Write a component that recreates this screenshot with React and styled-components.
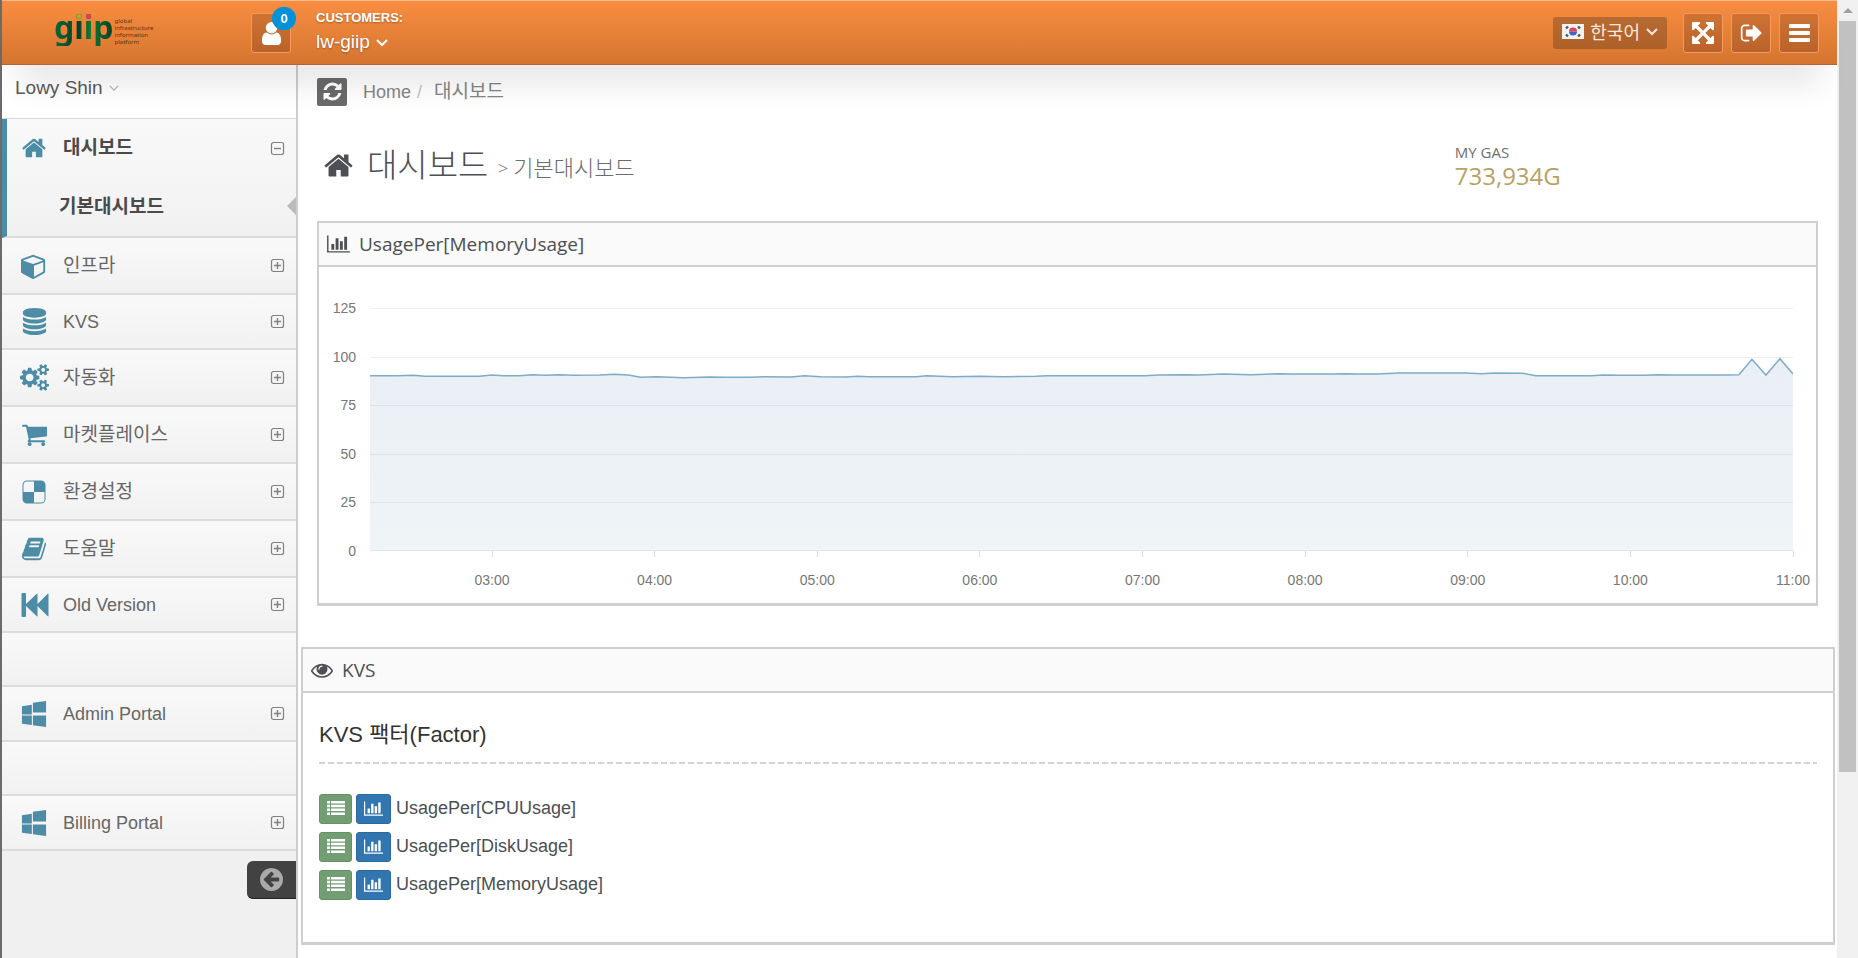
import React from 'react';
import styled, { createGlobalStyle, css } from 'styled-components';

const sans = '"Liberation Sans", "Noto Sans CJK KR", sans-serif';
const open = '"Open Sans", "Noto Sans CJK KR", sans-serif';

const GlobalStyle = createGlobalStyle`
  * { box-sizing: border-box; }
  body { margin: 0; background: #fff; font-family: ${sans}; color: #4c4f53; overflow: hidden; }
  button { font: inherit; padding: 0; cursor: pointer; }
  a { color: inherit; text-decoration: none; }
  h1, h2, h3, ul, ol, p { margin: 0; padding: 0; font-weight: 400; list-style: none; }
`;

/* ---------- icons ---------- */

const Svg = styled.svg`
  display: block;
  flex: none;
  fill: currentColor;
  overflow: visible;
`;

const paths = {
  home: ['0 0 1792 1792', 'M1472 992v480q0 26-19 45t-45 19h-384v-384h-256v384h-384q-26 0-45-19t-19-45v-480q0-1 .5-3t.5-3l575-474 575 474q1 2 1 6zm223-69l-62 74q-8 9-21 11h-3q-13 0-21-7l-692-577-692 577q-12 8-24 7-13-2-21-11l-62-74q-8-10-7-23.5t11-21.5l719-599q32-26 76-26t76 26l244 204v-195q0-14 9-23t23-9h192q14 0 23 9t9 23v408l219 182q10 8 11 21.5t-7 23.5z'],
  cube: ['0 0 1792 1792', 'M896 1629l640-349v-636l-640 233v752zm-64-865l698-254-698-254-698 254zm832-252v768q0 35-18 65t-49 47l-704 384q-28 16-61 16t-61-16l-704-384q-31-17-49-47t-18-65v-768q0-40 23-73t61-47l704-256q22-8 44-8t44 8l704 256q38 14 61 47t23 73z'],
  database: ['0 0 1792 1792', 'M896 768q237 0 443-43t325-127v170q0 69-103 128t-280 93.5-385 34.5-385-34.5-280-93.5-103-128v-170q119 84 325 127t443 43zm0 768q237 0 443-43t325-127v170q0 69-103 128t-280 93.5-385 34.5-385-34.5-280-93.5-103-128v-170q119 84 325 127t443 43zm0-384q237 0 443-43t325-127v170q0 69-103 128t-280 93.5-385 34.5-385-34.5-280-93.5-103-128v-170q119 84 325 127t443 43zm0-1152q208 0 385 34.5t280 93.5 103 128v128q0 69-103 128t-280 93.5-385 34.5-385-34.5-280-93.5-103-128v-128q0-69 103-128t280-93.5 385-34.5z'],
  cogs: ['0 0 1920 1792', 'M896 896q0-106-75-181t-181-75-181 75-75 181 75 181 181 75 181-75 75-181zm768 512q0-52-38-90t-90-38-90 38-38 90q0 53 37.5 90.5t90.5 37.5 90.5-37.5 37.5-90.5zm0-1024q0-52-38-90t-90-38-90 38-38 90q0 53 37.5 90.5t90.5 37.5 90.5-37.5 37.5-90.5zm-384 421v185q0 10-7 19.5t-16 10.5l-155 24q-11 35-32 76 34 48 90 115 7 11 7 20 0 12-7 19-23 30-82.5 89.5t-78.5 59.5q-11 0-21-7l-115-90q-37 19-77 31-11 108-23 155-7 24-30 24h-186q-11 0-20-7.5t-10-17.5l-23-153q-34-10-75-31l-118 89q-7 7-20 7-11 0-21-8-144-133-144-160 0-9 7-19 10-14 41-53t47-61q-23-44-35-82l-152-24q-10-1-17-9.5t-7-19.5v-185q0-10 7-19.5t16-10.5l155-24q11-35 32-76-34-48-90-115-7-11-7-20 0-12 7-20 22-30 82-89t79-59q11 0 21 7l115 90q34-18 77-32 11-108 23-154 7-24 30-24h186q11 0 20 7.5t10 17.5l23 153q34 10 75 31l118-89q8-7 20-7 11 0 21 8 144 133 144 160 0 8-7 19-12 16-42 54t-45 60q23 48 34 82l152 23q10 2 17 10.5t7 19.5zm640 533v140q0 16-149 31-12 27-30 52 51 113 51 138 0 4-4 7-122 71-124 71-8 0-46-47t-52-68q-20 2-30 2t-30-2q-14 21-52 68t-46 47q-2 0-124-71-4-3-4-7 0-25 51-138-18-25-30-52-149-15-149-31v-140q0-16 149-31 13-29 30-52-51-113-51-138 0-4 4-7 4-2 35-20t59-34 30-16q8 0 46 46.5t52 67.5q20-2 30-2t30 2q51-71 92-112l6-2q4 0 124 70 4 3 4 7 0 25-51 138 17 23 30 52 149 15 149 31zm0-1024v140q0 16-149 31-12 27-30 52 51 113 51 138 0 4-4 7-122 71-124 71-8 0-46-47t-52-68q-20 2-30 2t-30-2q-14 21-52 68t-46 47q-2 0-124-71-4-3-4-7 0-25 51-138-18-25-30-52-149-15-149-31v-140q0-16 149-31 13-29 30-52-51-113-51-138 0-4 4-7 4-2 35-20t59-34 30-16q8 0 46 46.5t52 67.5q20-2 30-2t30 2q51-71 92-112l6-2q4 0 124 70 4 3 4 7 0 25-51 138 17 23 30 52 149 15 149 31z'],
  cart: ['0 0 1792 1792', 'M704 1536q0 52-38 90t-90 38-90-38-38-90 38-90 90-38 90 38 38 90zm896 0q0 52-38 90t-90 38-90-38-38-90 38-90 90-38 90 38 38 90zm128-1088v512q0 24-16.5 42.5t-40.5 21.5l-1044 122q13 60 13 70 0 16-24 64h920q26 0 45 19t19 45-19 45-45 19h-1024q-26 0-45-19t-19-45q0-11 8-31.5t16-36 21.5-40 15.5-29.5l-177-823h-204q-26 0-45-19t-19-45 19-45 45-19h256q16 0 28.5 6.5t19.5 15.5 13 24.5 8 26 5.5 29.5 4.5 26h1201q26 0 45 19t19 45z'],
  tiles: ['0 0 24 24', 'M5 0.5h14a4.5 4.5 0 0 1 4.500 4.500v14a4.500 4.500 0 0 1-4.500 4.500h-14a4.500 4.500 0 0 1-4.500-4.500v-14a4.500 4.500 0 0 1 4.500-4.500zM12 12V1.500H5A3.500 3.500 0 0 0 1.500 5V12zM12 12V22.500H19A3.500 3.500 0 0 0 22.500 19V12z'],
  book: ['0 0 1792 1792', 'M1703 478q40 57 18 129l-275 906q-19 64-76.5 107.5t-122.500 43.500h-923q-77 0-148.500-53.500t-99.500-131.500q-24-67-2-127 0-4 3-27t4-37q1-8-3-21.500t-3-19.500q2-11 8-21t16.500-23.500 16.500-23.500q23-38 45-91.500t30-91.500q3-10 .5-30t-.5-28q3-11 17-28t17-23q21-36 42-92t25-90q1-9-2.500-32t.5-28q4-13 22-30.500t22-22.500q19-26 42.500-84.500t27.500-96.500q1-8-3-25.500t-2-26.500q2-8 9-18t18-23 17-21q8-12 16.500-30.500t15-35 16-36 19.500-32 26.500-23.500 36-11.500 47.500 5.500l-1 3q38-9 51-9h761q74 0 114 56t18 130l-274 906q-36 119-71.500 153.500t-128.500 34.500h-869q-27 0-38 15-11 16-1 43 24 70 144 70h923q29 0 56-15.500t35-41.500l300-987q7-22 5-57 38 15 59 43zm-1064 2q-4 13 2 22.500t20 9.500h608q13 0 25.500-9.500t16.500-22.500l21-64q4-13-2-22.500t-20-9.500h-608q-13 0-25.500 9.500t-16.500 22.500zm-83 256q-4 13 2 22.500t20 9.500h608q13 0 25.500-9.500t16.500-22.500l21-64q4-13-2-22.500t-20-9.500h-608q-13 0-25.500 9.500t-16.500 22.500z'],
  rewind: ['0 0 26 24', 'M1 0h2.500q1 0 1 1v10L15 1q1-1 1 .3V11L26 1q1-1 1 .3v21.400q0 1.300-1 .3L16 13v9.700q0 1.300-1 .3L4.500 13v10q0 1-1 1H1q-1 0-1-1V1q0-1 1-1z'],
  windows: ['0 0 1664 1792', 'M682 1006v651l-682-94v-557h682zm0-743v659h-682v-565zm982 743v786l-907-125v-661h907zm0-1006v794h-907v-669z'],
  chart: ['0 0 2048 1792', 'M640 896v512h-256v-512h256zm384-512v1024h-256v-1024h256zm1024 1152v128h-2048v-1536h128v1408h1920zm-640-896v768h-256v-768h256zm384-384v1152h-256v-1152h256z'],
  eye: ['0 0 1792 1792', 'M1664 960q-152-236-381-353 61 104 61 225 0 185-131.500 316.500t-316.500 131.500-316.500-131.500-131.500-316.500q0-121 61-225-229 117-381 353 133 205 333.500 326.500t434.500 121.500 434.500-121.500 333.500-326.500zm-720-384q0-20-14-34t-34-14q-125 0-214.500 89.500t-89.500 214.500q0 20 14 34t34 14 34-14 14-34q0-86 61-147t147-61q20 0 34-14t14-34zm848 384q0 34-20 69-140 230-376.500 368.500t-499.500 138.500-499.500-139-376.500-368q-20-35-20-69t20-69q140-229 376.500-368t499.500-139 499.500 139 376.500 368q20 35 20 69z'],
  refresh: ['0 0 1792 1792', 'M1639 1056q0 5-1 7-64 268-268 434.500t-478 166.500q-146 0-282.500-55t-243.500-157l-129 129q-19 19-45 19t-45-19-19-45v-448q0-26 19-45t45-19h448q26 0 45 19t19 45-19 45l-137 137q71 66 161 102t187 36q134 0 250-65t186-179q11-17 53-117 8-23 30-23h192q13 0 22.500 9.500t9.500 22.500zm25-800v448q0 26-19 45t-45 19h-448q-26 0-45-19t-19-45 19-45l138-138q-148-137-349-137-134 0-250 65t-186 179q-11 17-53 117-8 23-30 23h-199q-13 0-22.500-9.500t-9.500-22.500v-7q65-268 270-434.500t480-166.500q146 0 284 55.500t245 156.500l130-129q19-19 45-19t45 19 19 45z'],
  user: ['128 0 1536 1792', 'M1536 1399q0 109-62.500 187t-150.500 78h-854q-88 0-150.500-78t-62.500-187q0-85 8.500-160.500t31.500-152 58.500-131 94-89 134.500-34.500q131 128 313 128t313-128q76 0 134.500 34.500t94 89 58.500 131 31.500 152 8.500 160.500zm-256-887q0 159-112.500 271.500t-271.500 112.500-271.500-112.500-112.500-271.500 112.500-271.500 271.500-112.500 271.500 112.500 112.500 271.500z'],
  expand: ['128 128 1536 1536', 'M1411 541l-355 355 355 355 144-144q29-31 70-14 39 17 39 59v448q0 26-19 45t-45 19h-448q-42 0-59-40-17-39 14-69l144-144-355-355-355 355 144 144q31 30 14 69-17 40-59 40h-448q-26 0-45-19t-19-45v-448q0-42 40-59 39-17 69 14l144 144 355-355-355-355-144 144q-19 19-45 19-12 0-24-5-40-17-40-59v-448q0-26 19-45t45-19h448q42 0 59 40 17 39-14 69l-144 144 355 355 355-355-144-144q-31-30-14-69 17-40 59-40h448q26 0 45 19t19 45v448q0 42-39 59-13 5-25 5-26 0-45-19z'],
  signout: ['0 64 1664 1664', 'M704 1440q0 4 1 20t.5 26.500-3 23.500-10 19.500-20.500 6.500h-320q-119 0-203.500-84.500t-84.500-203.500v-704q0-119 84.500-203.500t203.500-84.500h320q13 0 22.500 9.500t9.500 22.500q0 4 1 20t.5 26.500-3 23.500-10 19.500-20.500 6.500h-320q-66 0-113 47t-47 113v704q0 66 47 113t113 47h312l11.500 1 11.500 3 8 5.500 7 9 2 13.500zm928-544q0 26-19 45l-544 544q-19 19-45 19t-45-19-19-45v-288h-448q-26 0-45-19t-19-45v-384q0-26 19-45t45-19h448v-288q0-26 19-45t45-19 45 19l544 544q19 19 19 45z'],
  bars: ['0 0 21 18', 'M1 0h19q1 0 1 1v2q0 1-1 1H1q-1 0-1-1V1q0-1 1-1zM1 7h19q1 0 1 1v2q0 1-1 1H1q-1 0-1-1V8q0-1 1-1zM1 14h19q1 0 1 1v2q0 1-1 1H1q-1 0-1-1v-2q0-1 1-1z'],
  list: ['0 0 18 14', 'M0 0h3v2.500H0zM4 0h14v2.500H4zM0 3.800h3v2.500H0zM4 3.800h14v2.500H4zM0 7.600h3v2.500H0zM4 7.600h14v2.500H4zM0 11.400h3v2.500H0zM4 11.400h14v2.500H4z'],
  back: ['128 128 1536 1536', 'M1408 960v-128q0-26-19-45t-45-19h-502l189-189q19-19 19-45t-19-45l-91-91q-18-18-45-18t-45 18l-362 362-91 91q-18 18-18 45t18 45l91 91 362 362q18 18 45 18t45-18l91-91q18-18 18-45t-18-45l-189-189h502q26 0 45-19t19-45zm256-64q0 209-103 385.500t-279.500 279.500-385.500 103-385.500-103-279.500-279.500-103-385.500 103-385.500 279.500-279.500 385.500-103 385.500 103 279.500 279.500 103 385.500z'],
};

const Icon = ({ name, w, h = w }) => (
  <Svg width={w} height={h} viewBox={paths[name][0]} aria-hidden="true">
    <path d={paths[name][1]} />
  </Svg>
);

const Caret = ({ w = 12 }) => (
  <Svg width={w} height={w / 2 + 1} viewBox="0 0 12 7" aria-hidden="true">
    <path d="M1 1l5 5 5-5" fill="none" stroke="currentColor" strokeWidth="2" />
  </Svg>
);

const Toggle = ({ open: isOpen }) => (
  <Svg width="13" height="13" viewBox="0 0 13 13" aria-hidden="true">
    <g fill="none" stroke="#808080">
      <rect x="0.5" y="0.5" width="12" height="12" rx="2" strokeWidth="1.2" />
      <path d={isOpen ? 'M3 6.500h7' : 'M3 6.500h7M6.500 3v7'} strokeWidth="1.4" />
    </g>
  </Svg>
);

const Flag = () => (
  <Svg width="22" height="15" viewBox="0 0 22 15" aria-hidden="true">
    <rect width="22" height="15" fill="#f2f2f2" />
    <path d="M7 7.500a4 4 0 0 1 8 0z" fill="#e8414d" />
    <path d="M7 7.500a4 4 0 0 0 8 0z" fill="#3f63c8" />
    <g stroke="#555" strokeWidth="2.400">
      <path d="M4 4.500l2-2M16 2.500l2 2M4 10.500l2 2M16 12.500l2-2" />
    </g>
  </Svg>
);

/* ---------- frame ---------- */

const Window = styled.div`
  display: flex;
  min-height: 100vh;
  border-left: 2px solid #6b6b6b;
`;

const Page = styled.div`
  flex: 1;
  min-width: 0;
  display: flex;
  flex-direction: column;
`;

const ScrollTrack = styled.div`
  flex: none;
  width: 21px;
  height: 100vh;
  padding: 8px 2px 0;
  background: #f1f1f1;
`;

const ScrollArrow = styled.div`
  width: 0;
  margin: 0 auto 8px;
  border: 5px solid transparent;
  border-top: 0;
  border-bottom-color: #a0a0a0;
`;

const ScrollThumb = styled.div`
  height: 79%;
  background: #c1c1c1;
`;

/* ---------- header ---------- */

const Header = styled.header`
  position: relative;
  z-index: 2;
  display: flex;
  align-items: flex-start;
  height: 65px;
  padding: 0 18px 0 52px;
  border-top: 1px solid #f9bd90;
  border-bottom: 1px solid #b7652d;
  background: linear-gradient(#f88d40, #d57530);
  box-shadow: 0 34px 32px -16px rgba(0, 0, 0, 0.11);
  color: #fff;
`;

const Logo = styled.a`
  display: flex;
  width: 197px;
  padding-top: 8px;
  font-family: "Noto Sans", sans-serif;
  color: #0c5030;
`;

const LogoWord = styled.span`
  font-size: 32px;
  line-height: 36px;
  font-weight: 700;
  color: transparent;
  background:
    linear-gradient(90deg, #a8b02c 50%, #d8405c 50%) 20px 0 / 20px 12px no-repeat,
    linear-gradient(90deg, #0b6a38, #083c28 40%, #0b7a30 60%, #083c28);
  background-clip: text;
`;

const LogoTag = styled.span`
  padding: 9px 0 0 1px;
  font-size: 6px;
  line-height: 7px;
  color: #5d3315;
  white-space: pre-line;
`;

const headerButton = css`
  display: flex;
  align-items: center;
  justify-content: center;
  width: 40px;
  height: 40px;
  margin-top: 12px;
  border: 1px solid #f39a5c;
  border-radius: 3px;
  background: linear-gradient(#cf7334, #b9622a);
  color: #fff;
`;

const HeaderButton = styled.button`
  ${headerButton}
  position: relative;
  margin-left: ${(p) => (p.$first ? 0 : 8)}px;
`;

const Badge = styled.span`
  position: absolute;
  top: -7px;
  right: -6px;
  width: 24px;
  border-radius: 12px;
  background: #0091d9;
  font-size: 13px;
  font-weight: 700;
  line-height: 23px;
  text-align: center;
`;

const Customer = styled.div`
  flex: 1;
  padding: 9px 0 0 25px;
`;

const CustomerLabel = styled.div`
  font-size: 13px;
  font-weight: 700;
  line-height: 16px;
  text-shadow: 0 1px 2px rgba(0, 0, 0, 0.3);
`;

const PlainButton = styled.button`
  display: flex;
  align-items: center;
  gap: 6px;
  border: 0;
  background: none;
  color: ${(p) => p.$color};
  font-size: 19px;
  line-height: 22px;
`;

const CustomerButton = styled(PlainButton)`
  margin-top: 5px;
  text-shadow: 0 1px 2px rgba(0, 0, 0, 0.3);
`;

const Language = styled.button`
  display: flex;
  align-items: center;
  gap: 6px;
  height: 32px;
  margin: 16px 16px 0 0;
  padding: 0 9px 4px;
  border: 0;
  border-radius: 3px;
  background: linear-gradient(#b96a32, #ae6029);
  color: #fbe9dc;
  font-size: 18px;
`;

/* ---------- sidebar ---------- */

const Body = styled.div`
  flex: 1;
  display: flex;
`;

const Sidebar = styled.aside`
  flex: none;
  width: 296px;
  border-right: 2px solid #cdcdcd;
  background: #f0f0f0;
`;

const Account = styled.div`
  height: 54px;
  padding: 12px 13px;
  border-bottom: 1px solid #d8d8d8;
  background: #fff;
`;

const MenuItem = styled.li`
  position: relative;
  min-height: ${(p) => p.$h}px;
  border-bottom: 2px solid #dcdcdc;
  background: linear-gradient(#f9f9f9, #f1f1f1);
  ${(p) =>
    p.$active &&
    css`
      border-left: 5px solid #4d8ca6;
    `}
`;

const MenuLink = styled.a`
  display: grid;
  grid-template-columns: 26px 1fr 13px;
  column-gap: 16px;
  align-items: center;
  height: ${(p) => p.$h - 2}px;
  padding: 0 12px 0 ${(p) => (p.$active ? 14 : 19)}px;
  font-size: ${(p) => (p.$ko ? 19 : 18)}px;
  font-weight: ${(p) => (p.$active ? 700 : 400)};
  line-height: 22px;
  color: ${(p) => (p.$active ? '#4a4a4a' : '#666')};
`;

const MenuIcon = styled.span`
  display: flex;
  justify-content: center;
  color: #4d8ca6;
`;

const SubLink = styled.a`
  display: block;
  padding: 18px 0 17px 52px;
  font-size: 19px;
  font-weight: 700;
  line-height: 24px;
  color: #4a4a4a;
`;

const ActiveArrow = styled.span`
  position: absolute;
  right: 0;
  bottom: 21px;
  border: 9px solid transparent;
  border-left: 0;
  border-right-color: #bbb;
`;

const Collapse = styled.button`
  display: flex;
  align-items: center;
  width: 49px;
  height: 38px;
  margin: 10px 0 0 auto;
  padding-left: 13px;
  border: 0;
  border-bottom: 1px solid #222;
  border-radius: 6px 0 0 6px;
  background: #424242;
  color: #aaa;
`;

/* ---------- content ---------- */

const Content = styled.main`
  flex: 1;
  min-width: 0;
  padding: 0 2px 0 3px;
  overflow: hidden;
`;

const Inner = styled.div`
  padding: 0 17px 0 16px;
`;

const Ribbon = styled.div`
  display: flex;
  align-items: center;
  gap: 16px;
  height: 50px;
  padding-top: 3px;
`;

const RefreshButton = styled.button`
  display: flex;
  align-items: center;
  justify-content: center;
  width: 30px;
  height: 28px;
  border: 0;
  border-radius: 2px;
  background: #6a6a6a;
  color: #fff;
`;

const Crumbs = styled.ol`
  display: flex;
  align-items: center;
  line-height: 24px;
  color: #858585;
`;

const Crumb = styled.li`
  font-size: ${(p) => (p.$ko ? 19 : 18)}px;
  &:not(:last-child)::after {
    content: "/";
    margin: 0 12px 0 6px;
    color: #c4c4c4;
  }
`;

const TitleRow = styled.div`
  display: grid;
  grid-template-columns: 3fr 1fr;
  padding: 25px 0 31px;
`;

const Title = styled.h1`
  display: flex;
  align-items: center;
  padding-left: 6px;
  font-family: ${open};
  font-size: 33px;
  font-weight: 300;
  line-height: 50px;
  color: #4c4f53;
`;

const TitleText = styled.span`
  margin: 0 9px 0 13px;
`;

const TitleSub = styled.span`
  padding-top: 3px;
  font-size: 22px;
  line-height: 30px;
  color: #6c6c6c;
`;

const TitleMark = styled(TitleSub)`
  padding-top: 5px;
  padding-right: 5px;
  font-size: 19px;
`;

const Gas = styled.div`
  padding: 2px 0 0 12px;
  font-family: ${open};
`;

const GasLabel = styled.div`
  font-size: 15px;
  line-height: 20px;
  color: #6f6f6f;
`;

const GasValue = styled.div`
  font-size: 24px;
  line-height: 28px;
  color: #b8a164;
`;

const Panel = styled.section`
  border: 2px solid #cfcfcf;
  border-bottom-width: 3px;
  margin-bottom: ${(p) => p.$gap || 0}px;
`;

const PanelHead = styled.h2`
  display: flex;
  align-items: center;
  gap: 9px;
  height: 44px;
  padding: 0 8px;
  border-bottom: 2px solid #cfcfcf;
  background: #fafafa;
  font-family: ${open};
  font-size: 19px;
  color: #4c4f53;
`;

const ChartBox = styled.div`
  display: grid;
  grid-template-columns: 37px 1fr;
  column-gap: 14px;
  padding: 41px 23px 14px 0;
  font-size: 14px;
  line-height: 18px;
  color: #777;
`;

const YAxis = styled.div`
  display: flex;
  flex-direction: column;
  justify-content: space-between;
  margin: -9px 0;
  text-align: right;
`;

const Plot = styled.svg`
  display: block;
  width: 100%;
  height: 243px;
`;

const XAxis = styled.div`
  grid-column: 2;
  display: flex;
  margin: 0 -5.715% 0 2.86%;
`;

const XTick = styled.span`
  flex: 1;
  text-align: center;
  &::before {
    content: "";
    display: block;
    width: 1px;
    height: 6px;
    margin: 0 auto 14px;
    background: #ddd;
  }
`;

const Factors = styled.div`
  padding: 26px 16px 34px;
`;

const FactorTitle = styled.h3`
  height: 45px;
  margin-bottom: 30px;
  font-size: 22px;
  line-height: 32px;
  color: #333;
  background: repeating-linear-gradient(90deg, #d4d4d4 0 6px, transparent 6px 9px) bottom / 100% 2px no-repeat;
`;

const FactorRow = styled.li`
  display: flex;
  align-items: center;
  gap: 4px;
  margin-bottom: 8px;
  font-size: 18px;
  line-height: 22px;
  color: #4c4f53;
`;

const FactorButton = styled.button`
  display: flex;
  align-items: center;
  justify-content: center;
  width: ${(p) => (p.$blue ? 35 : 33)}px;
  height: 30px;
  padding-bottom: 2px;
  border: 1px solid ${(p) => (p.$blue ? '#2c699d' : '#659265')};
  border-radius: 3px;
  background: ${(p) => (p.$blue ? '#3276b1' : '#739e73')};
  color: #fff;
`;

const FactorName = styled.span`
  padding: 0 0 3px 1px;
`;

/* ---------- data ---------- */

const menu = [
  { icon: 'cube', w: 26, label: '인프라', ko: true, h: 57 },
  { icon: 'database', w: 27, label: 'KVS', h: 55 },
  { icon: 'cogs', w: 29, h2: 27, label: '자동화', ko: true, h: 57 },
  { icon: 'cart', w: 27, label: '마켓플레이스', ko: true, h: 57 },
  { icon: 'tiles', w: 24, label: '환경설정', ko: true, h: 57 },
  { icon: 'book', w: 26, label: '도움말', ko: true, h: 57 },
  { icon: 'rewind', w: 27, h2: 24, label: 'Old Version', h: 55 },
  { h: 54 },
  { icon: 'windows', w: 26, label: 'Admin Portal', h: 55 },
  { h: 54 },
  { icon: 'windows', w: 26, label: 'Billing Portal', h: 55 },
];

const hours = ['03:00', '04:00', '05:00', '06:00', '07:00', '08:00', '09:00', '10:00', '11:00'];

const series =
  '0,67.7 27,67.7 43,67.3 55,68.3 109,68.3 122,67 133,67.7 149,67.7 162,66.7 176,67.3 189,66.7 203,67.3 230,67 244,66.3 258,67 270,69.3 287,68.7 313,69.7 339,69 355,69.3 380,69.3 393,68.7 420,69 434,67.7 450,68.7 475,69 487,68.3 498,68.7 545,68.7 556,67.7 582,68.7 609,68.3 632,68.7 665,68.3 676,67.7 774,67.7 788,67 815,66.7 827,67 852,66 880,66.7 894,66.3 907,65.7 922,66 961,66 975,65.7 986,66 1005,66 1028,65 1095,65 1110,65.7 1123,65 1151,65.3 1164,67.7 1220,67.7 1231,67 1248,67.3 1273,67.3 1286,66.7 1301,67 1354,67 1367,66.7 1380,51.3 1394,67 1408,50.7 1421,66';

export default function App() {
  return (
    <>
      <GlobalStyle />
      <Window>
        <Page>
          <Header>
            <Logo href="#">
              <LogoWord>giip</LogoWord>
              <LogoTag>{'global\ninfrastructure\ninformation\nplatform'}</LogoTag>
            </Logo>
            <HeaderButton $first aria-label="Activity">
              <Icon name="user" w={23} h={27} />
              <Badge>0</Badge>
            </HeaderButton>
            <Customer>
              <CustomerLabel>CUSTOMERS:</CustomerLabel>
              <CustomerButton $color="#fff">
                lw-giip <Caret />
              </CustomerButton>
            </Customer>
            <Language>
              <Flag />
              한국어 <Caret />
            </Language>
            <HeaderButton $first aria-label="Full screen"><Icon name="expand" w={22} /></HeaderButton>
            <HeaderButton aria-label="Sign out"><Icon name="signout" w={22} /></HeaderButton>
            <HeaderButton aria-label="Menu"><Icon name="bars" w={21} h={18} /></HeaderButton>
          </Header>
          <Body>
            <Sidebar>
              <Account>
                <PlainButton $color="#5a5a5a">
                  Lowy Shin
                  <Svg width="10" height="6" viewBox="0 0 12 7" aria-hidden="true">
                    <path d="M1 1l5 5 5-5" fill="none" stroke="#b5b5b5" strokeWidth="1.500" />
                  </Svg>
                </PlainButton>
              </Account>
              <nav>
                <ul>
                  <MenuItem $active $h={119}>
                    <MenuLink href="#" $active $ko $h={60}>
                      <MenuIcon><Icon name="home" w={26} /></MenuIcon>
                      대시보드
                      <Toggle open />
                    </MenuLink>
                    <SubLink href="#">기본대시보드</SubLink>
                    <ActiveArrow />
                  </MenuItem>
                  {menu.map((m, i) => (
                    <MenuItem key={i} $h={m.h}>
                      {m.label && (
                        <MenuLink href="#" $ko={m.ko} $h={m.h}>
                          <MenuIcon><Icon name={m.icon} w={m.w} h={m.h2 || m.w} /></MenuIcon>
                          {m.label}
                          <Toggle />
                        </MenuLink>
                      )}
                    </MenuItem>
                  ))}
                </ul>
              </nav>
              <Collapse aria-label="Collapse menu"><Icon name="back" w={23} /></Collapse>
            </Sidebar>
            <Content>
              <Inner>
                <Ribbon>
                  <RefreshButton aria-label="Refresh"><Icon name="refresh" w={21} /></RefreshButton>
                  <Crumbs>
                    <Crumb><a href="#">Home</a></Crumb>
                    <Crumb $ko>대시보드</Crumb>
                  </Crumbs>
                </Ribbon>
                <TitleRow>
                  <Title>
                    <Icon name="home" w={31} />
                    <TitleText>대시보드</TitleText>
                    <TitleMark>&gt;</TitleMark>
                    <TitleSub>기본대시보드</TitleSub>
                  </Title>
                  <Gas>
                    <GasLabel>MY GAS</GasLabel>
                    <GasValue>733,934G</GasValue>
                  </Gas>
                </TitleRow>
                <Panel $gap={41}>
                  <PanelHead>
                    <Icon name="chart" w={23} h={20} />
                    UsagePer[MemoryUsage]
                  </PanelHead>
                  <ChartBox>
                    <YAxis>
                      {[125, 100, 75, 50, 25, 0].map((v) => <span key={v}>{v}</span>)}
                    </YAxis>
                    <Plot viewBox="0 0 1421 243" preserveAspectRatio="none" role="img" aria-label="Memory usage">
                      <defs>
                        <linearGradient id="area" x1="0" y1="0" x2="0" y2="1">
                          <stop offset="0" stopColor="#e9eff4" />
                          <stop offset="1" stopColor="#eff4f7" />
                        </linearGradient>
                      </defs>
                      <polygon points={`0,243 ${series} 1421,243`} fill="url(#area)" />
                      {[0, 1, 2, 3, 4, 5].map((n) => (
                        <rect key={n} x="0" y={Math.min(242, Math.round(n * 48.6))} width="1421" height="1" fill="#000" fillOpacity="0.06" />
                      ))}
                      <polyline points={series} fill="none" stroke="#7eabc8" strokeWidth="1.500" vectorEffect="non-scaling-stroke" />
                    </Plot>
                    <XAxis>
                      {hours.map((t) => <XTick key={t}>{t}</XTick>)}
                    </XAxis>
                  </ChartBox>
                </Panel>
              </Inner>
              <Panel>
                <PanelHead>
                  <Icon name="eye" w={22} />
                  KVS
                </PanelHead>
                <Factors>
                  <FactorTitle>KVS 팩터(Factor)</FactorTitle>
                  <ul>
                    {['CPUUsage', 'DiskUsage', 'MemoryUsage'].map((n) => (
                      <FactorRow key={n}>
                        <FactorButton aria-label={`List ${n}`}><Icon name="list" w={18} h={14} /></FactorButton>
                        <FactorButton $blue aria-label={`Chart ${n}`}><Icon name="chart" w={19} h={17} /></FactorButton>
                        <FactorName>{`UsagePer[${n}]`}</FactorName>
                      </FactorRow>
                    ))}
                  </ul>
                </Factors>
              </Panel>
            </Content>
          </Body>
        </Page>
        <ScrollTrack>
          <ScrollArrow />
          <ScrollThumb />
        </ScrollTrack>
      </Window>
    </>
  );
}
